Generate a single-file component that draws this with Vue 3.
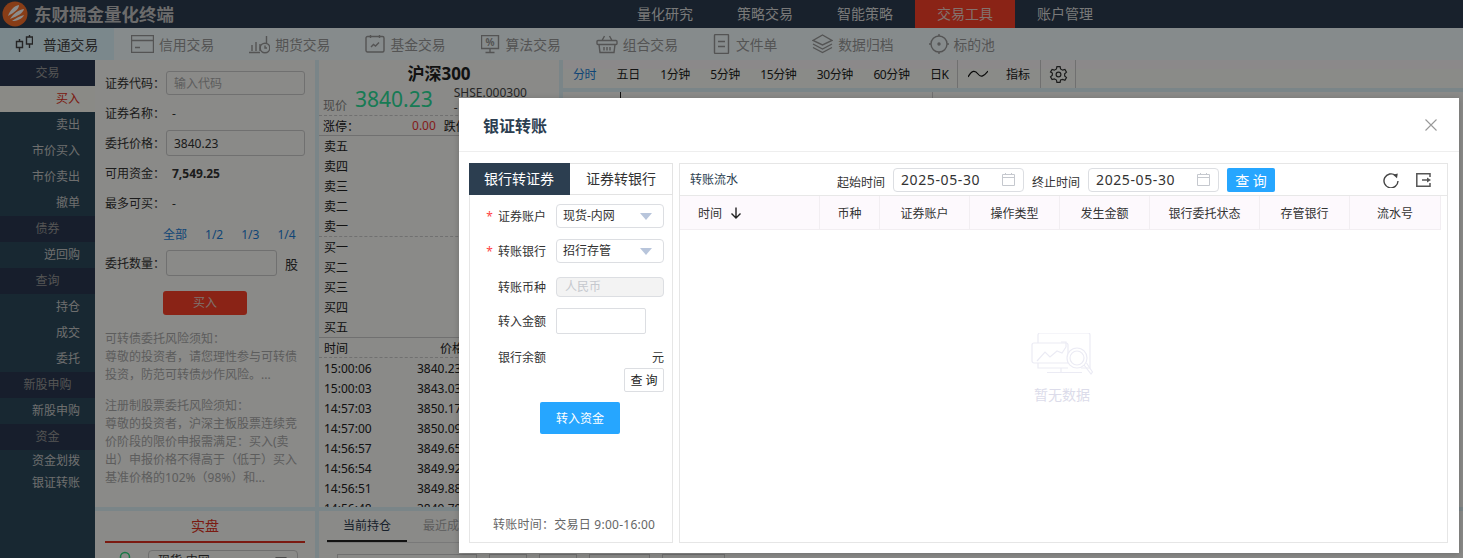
<script setup>
import { ref } from 'vue';

const navItems = ['量化研究', '策略交易', '智能策略', '交易工具', '账户管理'];
const tools = [
  { name: '普通交易', icon: 'candle' },
  { name: '信用交易', icon: 'card' },
  { name: '期货交易', icon: 'future' },
  { name: '基金交易', icon: 'fund' },
  { name: '算法交易', icon: 'algo' },
  { name: '组合交易', icon: 'basket' },
  { name: '文件单', icon: 'file' },
  { name: '数据归档', icon: 'layers' },
  { name: '标的池', icon: 'target' }
];

const sideItems = [
  { name: '交易', group: true },
  { name: '买入', active: true },
  { name: '卖出' },
  { name: '市价买入' },
  { name: '市价卖出' },
  { name: '撤单' },
  { name: '债券', group: true },
  { name: '逆回购' },
  { name: '查询', group: true },
  { name: '持仓' },
  { name: '成交' },
  { name: '委托' },
  { name: '新股申购', group: true },
  { name: '新股申购' },
  { name: '资金', group: true },
  { name: '资金划拨', short: true },
  { name: '银证转账', short: true }
];

const sells = ['卖五', '卖四', '卖三', '卖二', '卖一'];
const buys = ['买一', '买二', '买三', '买四', '买五'];
const ticks = [
  ['15:00:06', '3840.23'],
  ['15:00:03', '3843.03'],
  ['14:57:03', '3850.17'],
  ['14:57:00', '3850.09'],
  ['14:56:57', '3849.65'],
  ['14:56:54', '3849.92'],
  ['14:56:51', '3849.88'],
  ['14:56:48', '3849.70']
];

const periods = ['分时', '五日', '1分钟', '5分钟', '15分钟', '30分钟', '60分钟', '日K'];
const columns = ['币种', '证券账户', '操作类型', '发生金额', '银行委托状态', '存管银行', '流水号'];

const activeTab = ref(0);
const startDate = ref('2025-05-30');
const endDate = ref('2025-05-30');
</script>

<template>
  <div class="page">
    <!-- 顶部导航 -->
    <header class="topbar">
      <div class="logo">
        <svg width="26" height="26" viewBox="0 0 26 26">
          <circle cx="13" cy="13" r="12.500" fill="#f8702a" />
          <path d="M6 15C8 9 12 5 17 4C17 8 13 11 6 15Z" fill="#fff" />
          <path d="M8 18C11 13 16 9 22 8C21 12 16 15 8 18Z" fill="#fff" />
          <path d="M10 20C14 17 18 15 22 14C20 18 15 20 10 20Z" fill="#fff" />
        </svg>
        <span>东财掘金量化终端</span>
      </div>
      <nav class="nav">
        <span v-for="item in navItems" :key="item" class="nav-item" :class="{ active: item === '交易工具' }">{{ item }}</span>
      </nav>
    </header>

    <!-- 工具栏 -->
    <div class="toolbar">
      <div v-for="(tool, i) in tools" :key="tool.name" class="tool" :class="{ active: i === 0 }">
        <svg v-if="tool.icon === 'candle'" width="18" height="18" viewBox="0 0 18 18" class="ico">
          <path d="M1.500 6.500h6v6h-6zM4.500 4v2.500M4.500 12.500V17M11.500 2h6v7h-6zM14.500 0v2M14.500 9v4" />
        </svg>
        <svg v-if="tool.icon === 'card'" width="23" height="18" viewBox="0 0 23 18" class="ico">
          <path d="M.5.500h22v17H.5zM.5 5.500h22M4 12.500h5" />
        </svg>
        <svg v-if="tool.icon === 'future'" width="21" height="20" viewBox="0 0 21 20" class="ico">
          <path d="M0 18.500h11M3 17V11M7 17V8M11 17V10M17.500 2v7" />
          <circle cx="16" cy="14" r="4.800" />
          <path d="M16 11.500V14h2" />
        </svg>
        <svg v-if="tool.icon === 'fund'" width="20" height="18" viewBox="0 0 20 18" class="ico">
          <path d="M2.500 1.500h15a1.500 1.500 0 0 1 1.500 1.500v12.500a1.500 1.500 0 0 1-1.500 1.500h-15A1.500 1.500 0 0 1 1 15.500V3a1.500 1.500 0 0 1 1.500-1.500zM5.500 0v3M14.500 0v3M6 12l2.500-2.500 2 1.500 3.500-3.500" />
        </svg>
        <svg v-if="tool.icon === 'algo'" width="20" height="19" viewBox="0 0 20 19" class="ico">
          <path d="M.5.500h17v13H.5zM9 13.500V17M4.500 17.500h9" />
          <text x="9" y="11" text-anchor="middle" class="ico-text">%</text>
        </svg>
        <svg v-if="tool.icon === 'basket'" width="22" height="19" viewBox="0 0 22 19" class="ico">
          <path d="M2 5.500h18a1 1 0 0 1 1 1v2a1 1 0 0 1-1 1H2a1 1 0 0 1-1-1v-2a1 1 0 0 1 1-1zM3 9.500l1 8h14l1-8M6 5.500 8.500 1M16 5.500 13.500 1M8 12v3.500M11 12v3.500M14 12v3.500" />
        </svg>
        <svg v-if="tool.icon === 'file'" width="18" height="20" viewBox="0 0 18 20" class="ico">
          <path d="M2.500.5h12a1 1 0 0 1 1 1v17a1 1 0 0 1-1 1h-12a1 1 0 0 1-1-1v-17a1 1 0 0 1 1-1zM5 7.500h7M5 12.500h7" />
        </svg>
        <svg v-if="tool.icon === 'layers'" width="21" height="20" viewBox="0 0 21 20" class="ico">
          <path d="M10.500 1 20 6.500 10.500 11 1 6.500zM1 10l9.500 5L20 10M1 13.500l9.500 5 9.500-5" />
        </svg>
        <svg v-if="tool.icon === 'target'" width="20" height="20" viewBox="0 0 20 20" class="ico">
          <circle cx="10" cy="10" r="8" />
          <circle cx="10" cy="10" r="1" />
          <path d="M10 0v2M10 18v2M0 10h2M18 10h2" />
        </svg>
        <span>{{ tool.name }}</span>
      </div>
    </div>

    <div class="main">
      <!-- 左侧菜单 -->
      <aside class="sidebar">
        <div
          v-for="(item, i) in sideItems"
          :key="i"
          class="side-item"
          :class="{ group: item.group, active: item.active, short: item.short }"
        >{{ item.name }}</div>
      </aside>

      <div class="content">
        <div class="top-row">
          <!-- 下单 -->
          <section class="order">
            <div class="order-row h24">
              <label>证券代码：</label>
              <div class="box muted">输入代码</div>
            </div>
            <div class="order-row plain name-row">
              <label>证券名称：</label>
              <span class="val">-</span>
            </div>
            <div class="order-row h26">
              <label>委托价格：</label>
              <div class="box">3840.23</div>
            </div>
            <div class="order-row plain avail-row">
              <label>可用资金：</label>
              <b class="val">7,549.25</b>
            </div>
            <div class="order-row plain max-row">
              <label>最多可买：</label>
              <span class="val">-</span>
            </div>
            <div class="ratios">
              <span>全部</span><span>1/2</span><span>1/3</span><span>1/4</span>
            </div>
            <div class="order-row h26">
              <label>委托数量：</label>
              <div class="box qty"></div>
              <span class="unit">股</span>
            </div>
            <div class="buy-btn">买入</div>
            <p class="note">可转债委托风险须知：<br>尊敬的投资者，请您理性参与可转债投资，防范可转债炒作风险。...</p>
            <p class="note">注册制股票委托风险须知：<br>尊敬的投资者，沪深主板股票连续竞价阶段的限价申报需满足：买入(卖出）申报价格不得高于（低于）买入基准价格的102%（98%）和...</p>
          </section>

          <!-- 行情 -->
          <section class="quote">
            <div class="quote-title">沪深300</div>
            <div class="quote-price">
              <span class="price-label">现价</span>
              <span class="price">3840.23</span>
              <span class="code">SHSE.000300<br>-</span>
            </div>
            <div class="limit">
              <b>涨停：</b><span class="red">0.00</span><b>跌停：</b>
            </div>
            <div class="levels sell">
              <div v-for="s in sells" :key="s">{{ s }}</div>
            </div>
            <div class="levels buy">
              <div v-for="b in buys" :key="b">{{ b }}</div>
            </div>
            <div class="tick-head"><span>时间</span><span>价格</span></div>
            <div class="ticks">
              <div v-for="t in ticks" :key="t[0]" class="tick"><span>{{ t[0] }}</span><span>{{ t[1] }}</span></div>
            </div>
          </section>

          <!-- 图表 -->
          <section class="chart">
            <div class="periods">
              <span v-for="(p, i) in periods" :key="p" class="period" :class="{ on: i === 0 }">{{ p }}</span>
              <div class="period-tool">
                <svg width="20" height="10" viewBox="0 0 20 10" fill="none" stroke="#111" stroke-width="1.200">
                  <path d="M0 8 C4 1 7 1 10 5 C13 9 16 7 20 2" />
                </svg>
                <span>指标</span>
              </div>
              <div class="period-gear">
                <svg width="19" height="19" viewBox="0 0 24 24" fill="none" stroke="#333" stroke-width="1.500">
                  <circle cx="12" cy="12" r="3" />
                  <path d="M10 2h4l.6 3 2.600 1.500 2.900-1 2 3.500-2.300 2v2.800l2.300 2-2 3.500-2.900-1L14.600 19l-.6 3h-4l-.6-3-2.600-1.500-2.900 1-2-3.500 2.300-2v-2.800L1.900 9l2-3.500 2.900 1L9.400 5z" />
                </svg>
              </div>
            </div>
            <div class="chart-body">
              <i class="mark dark"></i>
              <i class="mark light"></i>
            </div>
          </section>
        </div>

        <div class="bottom-row">
          <section class="account">
            <div class="account-tab">实盘</div>
            <div class="account-select">
              <svg width="18" height="18" viewBox="0 0 18 18" fill="none" stroke="#2fdc7f" stroke-width="1.500">
                <circle cx="9" cy="7" r="4.500" />
              </svg>
              <div class="account-box">现货-内网<i></i></div>
            </div>
          </section>
          <section class="holdings">
            <div class="hold-tabs">
              <span class="hold-tab on">当前持仓</span>
              <span class="hold-tab">最近成交</span>
            </div>
            <div class="hold-tools">
              <i></i><i></i><i></i><i></i><i></i>
            </div>
          </section>
        </div>
      </div>
    </div>

    <div class="mask"></div>

    <!-- 银证转账弹窗 -->
    <div class="modal">
      <div class="modal-head">
        <span class="modal-title">银证转账</span>
        <svg class="close" width="12" height="12" viewBox="0 0 12 12" stroke="#999" stroke-width="1.100">
          <path d="M.5.500l11 11M11.500.500l-11 11" />
        </svg>
      </div>
      <div class="modal-body">
        <div class="transfer">
          <div class="tabs">
            <div class="tab" :class="{ on: activeTab === 0 }" @click="activeTab = 0">银行转证券</div>
            <div class="tab" :class="{ on: activeTab === 1 }" @click="activeTab = 1">证券转银行</div>
          </div>
          <div class="form">
            <div class="form-row first">
              <label><em>*</em>证券账户</label>
              <div class="select">现货-内网<i></i></div>
            </div>
            <div class="form-row second">
              <label><em>*</em>转账银行</label>
              <div class="select">招行存管<i></i></div>
            </div>
            <div class="form-row third">
              <label>转账币种</label>
              <div class="disabled">人民币</div>
            </div>
            <div class="form-row fourth">
              <label>转入金额</label>
              <div class="amount"></div>
            </div>
            <div class="form-row fifth">
              <label>银行余额</label>
              <span class="yuan">元</span>
            </div>
            <div class="query-line"><button class="query-small">查 询</button></div>
            <button class="submit">转入资金</button>
            <div class="tip">转账时间：交易日 9:00-16:00</div>
          </div>
        </div>

        <div class="flow">
          <div class="flow-bar">
            <span class="flow-title">转账流水</span>
            <span class="date-label start">起始时间</span>
            <div class="date">
              <span>{{ startDate }}</span>
              <svg width="13" height="13" viewBox="0 0 13 13" fill="none" stroke="#c5c8ce">
                <path d="M.5 1.500h12v11H.5zM.5 4.500h12M3.500 0v2M9.500 0v2" />
              </svg>
            </div>
            <span class="date-label">终止时间</span>
            <div class="date">
              <span>{{ endDate }}</span>
              <svg width="13" height="13" viewBox="0 0 13 13" fill="none" stroke="#c5c8ce">
                <path d="M.5 1.500h12v11H.5zM.5 4.500h12M3.500 0v2M9.500 0v2" />
              </svg>
            </div>
            <button class="query">查 询</button>
            <div class="flow-icons">
              <svg width="16" height="16" viewBox="0 0 16 16" fill="none" stroke="#444" stroke-width="1.400">
                <path d="M12.500 3.500A7 7 0 1 0 15 9" />
                <path d="M10 2.800 14.800 1.500 14 6.300z" fill="#444" stroke="none" />
              </svg>
              <svg width="15" height="14" viewBox="0 0 15 14" fill="none" stroke="#555" stroke-width="1.500">
                <path d="M14 4V.8H.8v12.400H14V10M6 7h6" />
                <path d="M11 4.500 15 7l-4 2.500z" fill="#555" stroke="none" />
              </svg>
            </div>
          </div>
          <div class="table-head">
            <div class="th first-col">
              时间
              <svg width="12" height="12" viewBox="0 0 12 12" fill="none" stroke="#222" stroke-width="1.400">
                <path d="M6 .5V11M1.500 6.500 6 11l4.500-4.500" />
              </svg>
            </div>
            <div v-for="c in columns" :key="c" class="th">{{ c }}</div>
          </div>
          <div class="empty">
            <svg width="62" height="44" viewBox="0 0 62 44" fill="none" stroke="#ebebf4" stroke-width="1.200">
              <path d="M7 10V2a2 2 0 0 1 2-2h48a2 2 0 0 1 2 2v33H50M7 30v5h30" />
              <path d="M3 10h32a2 2 0 0 1 2 2v18H3a2 2 0 0 1-2-2V12a2 2 0 0 1 2-2z" />
              <path d="M6 28l8-9 5 5 7-6 5 2 4-6M30 9h5v5" />
              <circle cx="46" cy="25" r="10" fill="#fff" />
              <circle cx="46" cy="25" r="7" />
              <path d="M53 32l7 9 1.500-2-6-9M30 35v4M16 39.500h35" />
            </svg>
            <span>暂无数据</span>
          </div>
        </div>
      </div>
    </div>
  </div>
</template>

<style>
html, body { margin: 0; padding: 0; overflow: hidden; }
</style>

<style scoped>
.page {
  position: relative;
  width: 100%;
  height: 558px;
  overflow: hidden;
  font-family: "Noto Sans", "Noto Sans CJK SC", sans-serif;
  font-size: 12px;
  color: #333;
  background: #fbfbf8;
}

.topbar {
  height: 28px;
  background: #2d3c50;
  display: flex;
  justify-content: space-between;
  padding-right: 348px;
}
.logo {
  display: flex;
  align-items: center;
  gap: 6px;
  padding-left: 2px;
}
.logo span {
  font-size: 17.500px;
  font-weight: 700;
  color: #c4c4c4;
  line-height: 28px;
}
.nav { display: flex; }
.nav-item {
  width: 100px;
  text-align: center;
  line-height: 28px;
  font-size: 14px;
  color: #dcdcdc;
}
.nav-item.active { background: #fb4029; color: #f0d0c8; }

.toolbar {
  height: 32px;
  background: #f4fdff;
  display: flex;
  gap: 35px;
  font-size: 13.800px;
  color: #999;
}
.tool {
  display: flex;
  align-items: center;
  gap: 5px;
}
.tool:first-child {
  width: 114px;
  padding-left: 15px;
  gap: 10px;
  box-sizing: border-box;
  background: #e0f7ff;
  color: #444;
  margin-right: -18px;
}
.ico { fill: none; stroke: currentColor; stroke-width: 1.400; flex: none; }
.ico-text { font-size: 10px; font-weight: 700; fill: currentColor; stroke: none; }

.main {
  display: flex;
  height: 498px;
}
.sidebar {
  width: 95px;
  flex: none;
  background: #2c4a5c;
  color: #c8c8c8;
}
.side-item {
  height: 26px;
  line-height: 25px;
  text-align: right;
  padding-right: 15px;
}
.side-item.group {
  background: #2a3850;
  text-align: center;
  padding-right: 0;
  color: #999;
}
.side-item.active { background: #fbfbf4; color: #e03020; }
.side-item.short { height: 22px; line-height: 22px; }

.content {
  flex: 1;
  min-width: 0;
  display: flex;
  flex-direction: column;
  gap: 4px;
  background: #dff3f7;
}
.top-row {
  height: 447px;
  display: flex;
  gap: 4px;
}
.order {
  width: 220px;
  flex: none;
  background: #fbfbf7;
  padding: 11px 10px 0;
  box-sizing: border-box;
}
.order-row {
  display: flex;
  align-items: center;
}
.order-row label { width: 61px; flex: none; }
.h24 { height: 24px; }
.h26 { height: 26px; }
.plain { height: 18px; }
.name-row { margin: 9px 0 8px; }
.avail-row { margin-top: 8px; }
.max-row { margin-top: 12px; }
.val { padding-left: 6px; }
.box {
  flex: 1;
  height: 100%;
  box-sizing: border-box;
  border: 1px solid #ccc;
  border-radius: 3px;
  padding-left: 7px;
  display: flex;
  align-items: center;
}
.box.muted { color: #aaa; }
.box.qty { flex: none; width: 111px; }
.unit { margin-left: 8px; font-size: 13px; }
.ratios {
  display: flex;
  color: #1c7fd8;
  height: 18px;
  align-items: center;
  margin: 13px 0 7px;
}
.ratios span:first-child { margin-left: 58px; }
.ratios span + span { margin-left: 18px; }
.buy-btn {
  width: 84px;
  height: 24px;
  line-height: 24px;
  margin: 15px 0 15px 58px;
  background: #fb4029;
  border-radius: 3px;
  text-align: center;
  color: #e8d0c8;
}
.note {
  margin: 0 0 13px;
  line-height: 18px;
  color: #aaa;
}

.quote {
  width: 240px;
  flex: none;
  background: #fbfbf7;
  overflow: hidden;
}
.quote-title {
  height: 28px;
  line-height: 27px;
  text-align: center;
  font-size: 17px;
  font-weight: 700;
  color: #222;
}
.quote-price {
  display: flex;
  align-items: flex-start;
  height: 27px;
  padding-left: 4px;
}
.price-label { margin-top: 8px; color: #888; }
.price {
  font-size: 21px;
  line-height: 22px;
  color: #2ae09a;
  margin-left: 8px;
}
.code {
  margin-left: 21px;
  line-height: 15px;
  margin-top: -3px;
  color: #444;
}
.limit {
  height: 21px;
  border-top: 1px dashed #ccc;
  border-bottom: 1px solid #ccc;
  display: flex;
  align-items: center;
  padding-left: 4px;
  box-sizing: border-box;
}
.limit b { font-weight: 400; color: #222; }
.red { color: #ee3535; margin-left: 53px; margin-right: 8px; }
.levels div { height: 20px; line-height: 22px; padding-left: 5px; color: #222; }
.sell { border-bottom: 1px dashed #ccc; }
.buy { border-bottom: 1px solid #ccc; }
.tick-head {
  height: 20px;
  box-sizing: border-box;
  line-height: 21px;
  display: flex;
  border-bottom: 1px dashed #ccc;
  padding-left: 5px;
  color: #222;
}
.tick-head span:first-child { width: 116px; }
.tick { height: 20px; line-height: 22px; display: flex; padding-left: 5px; color: #222; }
.tick span:first-child { width: 93px; }

.chart {
  flex: 1;
  min-width: 0;
  display: flex;
  flex-direction: column;
  gap: 4px;
}
.periods {
  height: 28px;
  display: flex;
  align-items: center;
  background: linear-gradient(#fef9fb 9px, #fbfef8 9px);
  padding-left: 10px;
  color: #222;
}
.period { margin-right: 20.400px; letter-spacing: -0.4px; }
.period.on { color: #1c7fd8; }
.period-tool {
  height: 100%;
  display: flex;
  align-items: center;
  gap: 18px;
  border-left: 1px solid #ccc;
  margin-left: -12px;
  padding: 0 10px;
}
.period-gear {
  height: 100%;
  display: flex;
  align-items: center;
  border-left: 1px solid #ccc;
  border-right: 1px solid #ccc;
  padding: 0 7px 0 8px;
}
.chart-body { flex: 1; background: #fbfbf7; position: relative; }
.mark { position: absolute; top: 0; width: 1px; height: 40px; }
.mark.dark { left: 57px; background: #222; }
.mark.light { left: 369px; background: #ccc; }

.bottom-row {
  flex: 1;
  display: flex;
  gap: 4px;
}
.account {
  width: 220px;
  flex: none;
  background: #fbfbf7;
  padding: 0 10px;
  box-sizing: border-box;
}
.account-tab {
  height: 30px;
  line-height: 30px;
  text-align: center;
  font-size: 14px;
  color: #e03020;
  border-bottom: 2px solid #e03020;
}
.account-select {
  display: flex;
  align-items: flex-start;
  margin-top: 7px;
  padding-left: 11px;
  gap: 14px;
}
.account-box {
  position: relative;
  width: 150px;
  height: 22px;
  box-sizing: border-box;
  border: 1px solid #ccc;
  border-radius: 4px;
  padding-left: 9px;
  line-height: 20px;
  color: #333;
}
.account-box i {
  position: absolute;
  right: 10px;
  top: 6px;
  border-left: 6px solid transparent;
  border-right: 6px solid transparent;
  border-top: 7px solid #888;
}
.holdings { flex: 1; background: #fbfbf7; padding: 0 8px; }
.hold-tabs { height: 31px; border-bottom: 1px solid #ddd; display: flex; }
.hold-tab { width: 80px; text-align: center; line-height: 30px; color: #aaa; box-sizing: border-box; }
.hold-tab.on { color: #2d3c50; border-bottom: 2px solid #222; height: 31px; }
.hold-tools { display: flex; gap: 12px; margin-top: 11px; padding-left: 10px; }
.hold-tools i { height: 24px; width: 38px; box-sizing: border-box; border: 1px solid #ccc; }
.hold-tools i:nth-child(1) { width: 140px; }
.hold-tools i:nth-child(4) { width: 61px; }
.hold-tools i:nth-child(5) { width: 63px; }

.mask {
  position: absolute;
  inset: 0;
  background: rgba(0, 0, 0, 0.45);
}

.modal {
  position: absolute;
  left: 459px;
  top: 98px;
  width: 1000px;
  height: 455px;
  background: #fff;
  box-shadow: 0 1px 6px rgba(0, 0, 0, 0.2);
  display: flex;
  flex-direction: column;
}
.modal-head {
  height: 54px;
  flex: none;
  box-sizing: border-box;
  border-bottom: 1px solid #eee;
  display: flex;
  align-items: center;
  justify-content: space-between;
  padding: 0 22px 0 24px;
}
.modal-title {
  font-size: 16px;
  font-weight: 700;
  color: #2c3e50;
}
.modal-body {
  flex: 1;
  display: flex;
  gap: 6px;
  padding: 11px 11px 10px 10px;
  min-height: 0;
}

.transfer {
  width: 204px;
  flex: none;
  display: flex;
  flex-direction: column;
}
.tabs { display: flex; height: 32px; flex: none; }
.tab {
  flex: 1;
  box-sizing: border-box;
  border: 1px solid #e3e3e3;
  border-left: 0;
  text-align: center;
  line-height: 30px;
  font-size: 14px;
  color: #333;
  cursor: pointer;
}
.tab:first-child { flex: none; width: 101px; }
.tab.on { background: #2c3e50; color: #fff; border-color: #2c3e50; }
.form {
  flex: 1;
  display: flex;
  flex-direction: column;
  box-sizing: border-box;
  border: 1px solid #e6e6e6;
  border-top: 0;
  padding: 9px 8px 9px 0;
}
.form-row { display: flex; align-items: center; }
.form-row label {
  width: 76px;
  flex: none;
  margin-right: 10px;
  text-align: right;
}
.form-row em { color: #f44; font-style: normal; margin-right: 5px; }
.first, .second { height: 24px; }
.second { margin-top: 11px; }
.third { height: 20px; margin-top: 14px; }
.fourth { height: 26px; margin-top: 11px; }
.fifth { height: 20px; margin-top: 13px; justify-content: space-between; }
.fifth label { margin-right: 0; }
.select {
  position: relative;
  flex: 1;
  height: 100%;
  box-sizing: border-box;
  border: 1px solid #dcdee2;
  border-radius: 4px;
  padding-left: 6px;
  line-height: 22px;
  color: #333;
}
.select i {
  position: absolute;
  right: 11px;
  top: 8px;
  border-left: 6px solid transparent;
  border-right: 6px solid transparent;
  border-top: 7px solid #b8c5db;
}
.disabled {
  flex: 1;
  height: 100%;
  box-sizing: border-box;
  background: #f3f3f3;
  border: 1px solid #dcdee2;
  border-radius: 4px;
  padding-left: 8px;
  line-height: 18px;
  color: #c5c8ce;
}
.amount {
  width: 90px;
  height: 100%;
  box-sizing: border-box;
  border: 1px solid #dcdee2;
  border-radius: 2px;
}
.query-line { display: flex; justify-content: flex-end; margin-top: 1px; }
.query-small {
  width: 40px;
  height: 24px;
  padding: 0;
  border: 1px solid #dcdee2;
  border-radius: 2px;
  background: #fff;
  font: inherit;
  color: #222;
}
.submit {
  align-self: flex-start;
  width: 80px;
  height: 32px;
  margin: 10px 0 0 70px;
  padding: 0;
  border: 0;
  border-radius: 2px;
  background: #26a6ff;
  color: #fff;
  font: inherit;
}
.tip {
  margin-top: auto;
  padding-left: 23px;
  white-space: nowrap;
  letter-spacing: 0.25px;
  color: #666;
}

.flow {
  flex: 1;
  min-width: 0;
  display: flex;
  flex-direction: column;
  border: 1px solid #e6e6e6;
  box-sizing: border-box;
}
.flow-bar {
  height: 32px;
  flex: none;
  display: flex;
  align-items: center;
  padding-left: 10px;
  border-bottom: 1px solid #e8e8e8;
  box-sizing: border-box;
}
.flow-title { width: 147px; color: #2c3e50; margin-bottom: 2px; }
.date-label { margin: 4px 8px 0 8px; color: #333; }
.date-label.start { margin-left: 0; }
.date {
  width: 131px;
  height: 24px;
  box-sizing: border-box;
  border: 1px solid #dcdee2;
  border-radius: 4px;
  display: flex;
  align-items: center;
  justify-content: space-between;
  padding: 0 8px 0 7px;
  font-size: 14px;
  letter-spacing: 0.6px;
  color: #333;
}
.query {
  width: 48px;
  height: 24px;
  margin-left: 8px;
  padding: 0;
  border: 0;
  border-radius: 2px;
  background: #26a6ff;
  color: #fff;
  font-size: 14px;
  font-family: inherit;
}
.flow-icons {
  margin-left: auto;
  display: flex;
  align-items: center;
  gap: 17px;
  padding-right: 16px;
}
.table-head {
  height: 34px;
  box-sizing: border-box;
  flex: none;
  margin-right: 6px;
  display: grid;
  grid-template-columns: 140px 60px 90px 90px 90px 110px 90px 91px;
  background: #fdf9fd;
  border-bottom: 1px solid #f2eef2;
}
.th {
  display: flex;
  align-items: center;
  justify-content: center;
  gap: 8px;
  border-right: 1px solid #f2eef2;
  color: #333;
}
.th.first-col { justify-content: flex-start; padding-left: 18px; }
.empty {
  flex: 1;
  display: flex;
  flex-direction: column;
  align-items: center;
  padding: 103px 3px 0 0;
  gap: 7px;
  font-size: 14px;
  color: #dcdcea;
}
</style>
